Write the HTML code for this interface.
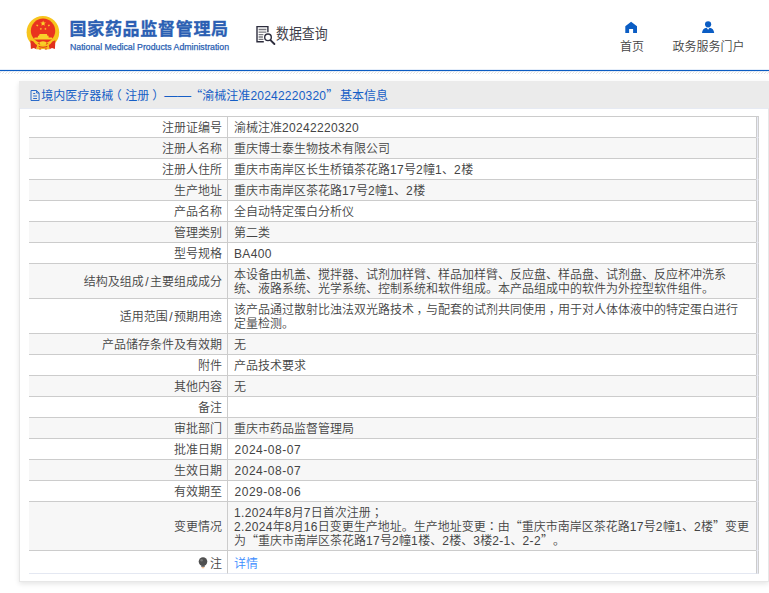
<!DOCTYPE html>
<html lang="zh-CN">
<head>
<meta charset="utf-8">
<title>国家药品监督管理局 数据查询</title>
<style>
html,body{margin:0;padding:0;}
body{width:769px;height:593px;overflow:hidden;background:#fff;position:relative;
  font-family:"Liberation Sans","Noto Sans CJK SC",sans-serif;font-size:12px;color:#444;font-weight:350;text-spacing-trim:space-all;}
.abs{position:absolute;}
/* header */
#hdr{position:absolute;left:0;top:0;width:769px;height:70px;background:#fff;}
#title{position:absolute;left:69.500px;top:17px;font-size:17px;line-height:26px;font-weight:bold;-webkit-text-stroke:0.350px #2b5fb3;color:#2b5fb3;letter-spacing:0.700px;white-space:nowrap;}
#sub{position:absolute;left:70px;top:41px;font-size:8.75px;line-height:12px;color:#2b5fb3;-webkit-text-stroke:0.25px #2b5fb3;white-space:nowrap;}
#sjcx{position:absolute;left:275.500px;top:22px;font-size:15px;line-height:24px;color:#3a3a46;white-space:nowrap;transform:scaleX(0.86);transform-origin:0 0;-webkit-text-stroke:0.1px #3a3a46;}
.nav{position:absolute;top:39px;font-size:12px;line-height:16px;color:#444;white-space:nowrap;}
#blue{position:absolute;left:0;top:70px;width:769px;height:1px;background:#0b5cc3;box-shadow:0 -1px 0 rgba(11,92,195,0.10),0 1px 0 rgba(11,92,195,0.10);}
#hatch{position:absolute;left:0;top:71px;width:769px;height:3px;}
/* panel */
#panel{position:absolute;left:19px;top:81px;width:750px;height:501px;box-sizing:border-box;background:#fff;box-shadow:0 2px 5px rgba(0,0,0,0.10);}
#pborder{position:absolute;left:0;top:27px;width:750px;height:474px;box-sizing:border-box;border:1px solid #e7e7e7;border-top:none;pointer-events:none;}
#phead{position:absolute;left:0;top:0;width:750px;height:27px;background:#ebebeb;border-bottom:1px solid #e6eaf3;}
#ptitle{position:absolute;left:22.300px;top:8px;font-size:12px;line-height:14px;color:#165ec6;font-weight:400;white-space:nowrap;}
table{position:absolute;left:10px;top:35px;width:730px;border-collapse:separate;border-spacing:0;table-layout:fixed;}
td{padding:4px 0 2px;line-height:14px;font-size:12px;border-top:1px solid #ccc;vertical-align:middle;color:#444;}
td.l{width:193px;text-align:right;padding-right:5px;}
td.v{width:522px;border-left:1px solid #ccc;padding-left:6px;}
td.e{width:1px;border-left:1px solid #ccc;border-right:1px solid #cfcfcf;border-top-color:#e9ebf5;background:#e9ebf5;padding:0;}
tr:first-child td.e{border-top-color:#ccc;}
tr.g td.l, tr.g td.v{background:#f7f7f7;}
tr.last td{border-bottom:1px solid #e4e8f2;height:16px;padding:5px 0 1px;}
tr.last td.l{padding-right:5px;}
tr.last td.v{padding-left:6px;}
tr.last td.e{padding:0;}
a{color:#3b8cff;text-decoration:none;}
.n{letter-spacing:0.33px;}
.s{margin:0 1.400px;}
.m{position:relative;left:2.600px;}
.n2{letter-spacing:0.520px;margin-left:0.500px;}
.q{font-family:"Noto Sans CJK SC",sans-serif;line-height:0;}
.c{font-family:"Liberation Sans","Noto Sans CJK JP",sans-serif;}
#ptitle .d{font-size:13.4px;margin-left:3px;margin-right:-0.800px;letter-spacing:0;}
#ptitle .t{margin-left:1.800px;}
#ptitle .pl{position:relative;left:-3.500px;}
#ptitle .pr{position:relative;left:3px;}
</style>
</head>
<body>
<div id="hdr">
  <svg class="abs" style="left:24px;top:14px" width="38" height="38" viewBox="0 0 38 38">
    <circle cx="18.900" cy="18.200" r="16.300" fill="#f7c51e"/>
    <circle cx="19.050" cy="16.800" r="12.200" fill="#e9331f"/>
    <path d="M6.400 26.200 L9.400 27.400 Q11 29.800 13 31 L12.400 35.300 L9.800 34 L6.900 34.900 Z" fill="#e1301c"/>
    <path d="M31.400 26.200 L28.400 27.400 Q26.800 29.800 24.800 31 L25.400 35.300 L28 34 L30.900 34.900 Z" fill="#e1301c"/>
    <path d="M12.400 35.300 L13 32.600 Q19 35 24.800 32.600 L25.400 35.300 L22 35.600 L19 35 L16 35.600 Z" fill="#f4b81c"/>
    <path d="M14.500 31.800 Q19 33.600 23.500 31.800 L23.200 33 Q19 34.600 14.800 33 Z" fill="#e1301c"/>
    <path d="M15.200 35.500 L16 33.800 L17 35.500 Z M21 35.500 L22 33.800 L22.800 35.500 Z" fill="#e1301c"/>
    <ellipse cx="19" cy="29.100" rx="3.300" ry="1.900" fill="#f9cf2a"/>
    <path d="M13.800 29.700 Q16 28.600 15.700 30.800 M24.200 29.700 Q22 28.600 22.300 30.800" stroke="#e1301c" stroke-width="0.700" fill="none"/>
    <polygon points="19.10,6.40 19.84,8.38 21.95,8.47 20.30,9.79 20.86,11.83 19.10,10.66 17.34,11.83 17.90,9.79 16.25,8.47 18.36,8.38" fill="#fbd62a"/><polygon points="13.85,10.37 13.70,11.28 14.47,11.77 13.57,11.91 13.34,12.79 12.93,11.97 12.01,12.03 12.67,11.39 12.33,10.53 13.14,10.96" fill="#fbd62a"/><polygon points="24.25,10.37 24.96,10.96 25.77,10.53 25.43,11.39 26.09,12.03 25.17,11.97 24.76,12.79 24.53,11.91 23.63,11.77 24.40,11.28" fill="#fbd62a"/><polygon points="17.03,13.62 17.19,14.52 18.09,14.72 17.28,15.16 17.37,16.07 16.71,15.44 15.86,15.80 16.26,14.98 15.65,14.29 16.56,14.41" fill="#fbd62a"/><polygon points="21.17,13.62 21.64,14.41 22.55,14.29 21.94,14.98 22.34,15.80 21.49,15.44 20.83,16.07 20.92,15.16 20.11,14.72 21.01,14.52" fill="#fbd62a"/>
    <path d="M15 21.700 L15.600 20 H22.900 L23.500 21.700 Z M13.900 21.700 H24.600 V23.500 H13.900 Z M10.600 23.500 H27.900 L28.600 25.600 H9.900 Z" fill="#f9cf2a"/>
  </svg>
  <div id="title">国家药品监督管理局</div>
  <div id="sub">National Medical Products Administration</div>
  <svg class="abs" style="left:254px;top:24px" width="24" height="24" viewBox="0 0 24 24" fill="none" stroke="#2d2d3d">
    <path d="M9.800 17.800H3V2.600H13.900V8.200" stroke-width="1.400"/>
    <path d="M4.600 5.500h7.800M4.600 8.100h7.800M4.600 10.700h4.800M4.600 13h4.300M4.600 15.300h4.800" stroke-width="1.300" stroke="#7a7a80"/>
    <circle cx="14" cy="13.300" r="3.300" stroke-width="1.400" fill="#fff"/>
    <path d="M16.700 16.300L20.400 20" stroke-width="1.900" stroke-linecap="round"/>
  </svg>
  <div id="sjcx">数据查询</div>
  <svg class="abs" style="left:624px;top:20px" width="14" height="14" viewBox="0 0 14 14"><path d="M7.100 1.700L13 6.300V13H9.100V9H5.100V13H1.300V6.300Z" fill="#0b5dc4"/></svg>
  <div class="nav" style="left:620px">首页</div>
  <svg class="abs" style="left:701px;top:20px" width="14" height="14" viewBox="0 0 14 14"><circle cx="7.100" cy="4.300" r="3.100" fill="#0b5dc4"/><path d="M1 13.100C1.200 9.800 3 8 5.600 7.700L7.100 9.800L8.600 7.700C11.200 8 13 9.800 13.200 13.100Z" fill="#0b5dc4"/></svg>
  <div class="nav" style="left:672.500px">政务服务门户</div>
</div>
<div id="blue"></div>
<svg id="hatch" width="769" height="3" viewBox="0 0 769 3">
  <defs><pattern id="hp" x="-1" width="3" height="3" patternUnits="userSpaceOnUse"><path d="M0 3L3 0" stroke="#e0e0e0" stroke-width="0.850"/></pattern></defs>
  <rect width="769" height="3" fill="url(#hp)"/>
</svg>
<div id="panel">
  <div id="phead"></div><div id="pborder"></div>
  <svg class="abs" style="left:11px;top:8px" width="11" height="13" viewBox="0 0 11 13" fill="none" stroke="#165ec6" stroke-width="0.900"><path d="M1 1.500H6.600L9.100 4V11.500H1Z M6.600 1.500V4H9.100 M3.200 4.500H5.200 M3.200 7H7 M3.200 9.500H7"/></svg>
  <div id="ptitle">境内医疗器械<span class="pl">（</span>注册<span class="pr">）</span><span class="d">——</span><span class="q">“</span>渝械注准<span class="n" style="letter-spacing:0.22px">20242220320</span><span class="q">”</span><span class="t">基本信息</span></div>
  <table>
    <tr><td class="l">注册证编号</td><td class="v">渝械注准<span class="n">20242220320</span></td><td class="e"></td></tr>
    <tr class="g"><td class="l">注册人名称</td><td class="v">重庆博士泰生物技术有限公司</td><td class="e"></td></tr>
    <tr><td class="l">注册人住所</td><td class="v">重庆市南岸区长生桥镇茶花路<span class="n">17</span>号<span class="n">2</span>幢<span class="n">1</span>、<span class="n">2</span>楼</td><td class="e"></td></tr>
    <tr class="g"><td class="l">生产地址</td><td class="v">重庆市南岸区茶花路<span class="n">17</span>号<span class="n">2</span>幢<span class="n">1</span>、<span class="n">2</span>楼</td><td class="e"></td></tr>
    <tr><td class="l">产品名称</td><td class="v">全自动特定蛋白分析仪</td><td class="e"></td></tr>
    <tr class="g"><td class="l">管理类别</td><td class="v">第二类</td><td class="e"></td></tr>
    <tr><td class="l">型号规格</td><td class="v"><span class="n">BA400</span></td><td class="e"></td></tr>
    <tr class="g"><td class="l">结构及组成<span class="s">/</span>主要组成成分</td><td class="v">本设备由机盖、搅拌器、试剂加样臂、样品加样臂、反应盘、样品盘、试剂盘、反应杯冲洗系<br>统、液路系统、光学系统、控制系统和软件组成。本产品组成中的软件为外控型软件组件。</td><td class="e"></td></tr>
    <tr><td class="l">适用范围<span class="s">/</span>预期用途</td><td class="v">该产品通过散射比浊法双光路技术<span class="m">，</span>与配套的试剂共同使用<span class="m">，</span>用于对人体体液中的特定蛋白进行<br>定量检测。</td><td class="e"></td></tr>
    <tr class="g"><td class="l">产品储存条件及有效期</td><td class="v">无</td><td class="e"></td></tr>
    <tr><td class="l">附件</td><td class="v">产品技术要求</td><td class="e"></td></tr>
    <tr class="g"><td class="l">其他内容</td><td class="v">无</td><td class="e"></td></tr>
    <tr><td class="l">备注</td><td class="v">&nbsp;</td><td class="e"></td></tr>
    <tr class="g"><td class="l">审批部门</td><td class="v">重庆市药品监督管理局</td><td class="e"></td></tr>
    <tr><td class="l">批准日期</td><td class="v"><span class="n n2">2024-08-07</span></td><td class="e"></td></tr>
    <tr class="g"><td class="l">生效日期</td><td class="v"><span class="n n2">2024-08-07</span></td><td class="e"></td></tr>
    <tr><td class="l">有效期至</td><td class="v"><span class="n n2">2029-08-06</span></td><td class="e"></td></tr>
    <tr class="g"><td class="l">变更情况</td><td class="v"><span class="n">1.2024</span>年<span class="n">8</span>月<span class="n">7</span>日首次注册<span class="c" lang="ja">；</span><br><span class="n">2.2024</span>年<span class="n">8</span>月<span class="n">16</span>日变更生产地址。生产地址变更<span class="c" lang="ja">：</span>由<span class="q">“</span>重庆市南岸区茶花路<span class="n">17</span>号<span class="n">2</span>幢<span class="n">1</span>、<span class="n">2</span>楼<span class="q">”</span>变更<br>为<span class="q">“</span>重庆市南岸区茶花路<span class="n">17</span>号<span class="n">2</span>幢<span class="n">1</span>楼、<span class="n">2</span>楼、<span class="n">3</span>楼<span class="n">2-1</span>、<span class="n">2-2</span><span class="q">”</span>。</td><td class="e"></td></tr>
    <tr class="last"><td class="l"><svg width="10" height="12" viewBox="0 0 10 12" style="vertical-align:-1px;margin-right:2px"><circle cx="5" cy="4.600" r="4.300" fill="#505050"/><circle cx="3.600" cy="3.200" r="1.300" fill="#777"/><path d="M3.200 8.500h3.600v1.300h-3.600z" fill="#555"/><path d="M3.700 10.300h2.600v.9h-2.600z" fill="#f0a060"/></svg>注</td><td class="v"><a>详情</a></td><td class="e"></td></tr>
  </table>
</div>
</body>
</html>
